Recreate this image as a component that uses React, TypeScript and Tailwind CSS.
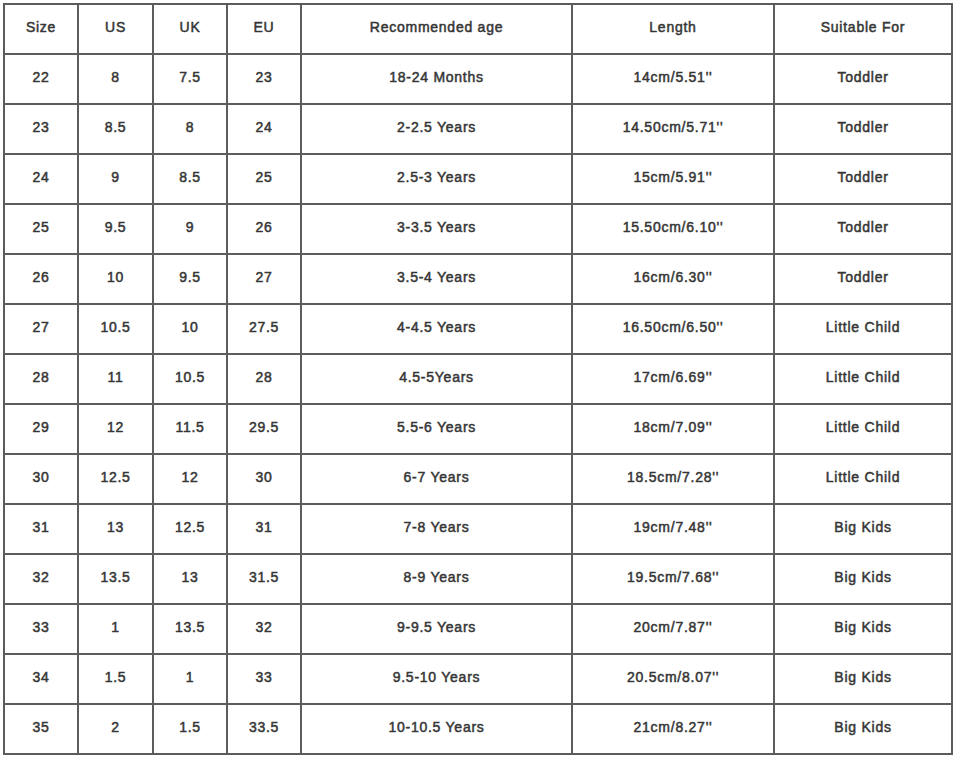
import React from "react";

const headers = ["Size", "US", "UK", "EU", "Recommended age", "Length", "Suitable For"];

const rows: string[][] = [
  ["22", "8", "7.5", "23", "18-24 Months", "14cm/5.51''", "Toddler"],
  ["23", "8.5", "8", "24", "2-2.5 Years", "14.50cm/5.71''", "Toddler"],
  ["24", "9", "8.5", "25", "2.5-3 Years", "15cm/5.91''", "Toddler"],
  ["25", "9.5", "9", "26", "3-3.5 Years", "15.50cm/6.10''", "Toddler"],
  ["26", "10", "9.5", "27", "3.5-4 Years", "16cm/6.30''", "Toddler"],
  ["27", "10.5", "10", "27.5", "4-4.5 Years", "16.50cm/6.50''", "Little Child"],
  ["28", "11", "10.5", "28", "4.5-5Years", "17cm/6.69''", "Little Child"],
  ["29", "12", "11.5", "29.5", "5.5-6 Years", "18cm/7.09''", "Little Child"],
  ["30", "12.5", "12", "30", "6-7 Years", "18.5cm/7.28''", "Little Child"],
  ["31", "13", "12.5", "31", "7-8 Years", "19cm/7.48''", "Big Kids"],
  ["32", "13.5", "13", "31.5", "8-9 Years", "19.5cm/7.68''", "Big Kids"],
  ["33", "1", "13.5", "32", "9-9.5 Years", "20cm/7.87''", "Big Kids"],
  ["34", "1.5", "1", "33", "9.5-10 Years", "20.5cm/8.07''", "Big Kids"],
  ["35", "2", "1.5", "33.5", "10-10.5 Years", "21cm/8.27''", "Big Kids"],
];

const widths = ["w-[74px]", "w-[75px]", "w-[74px]", "w-[74px]", "w-[271px]", "w-[202px]", "w-[178px]"];

const cell =
  "h-[50px] border-2 border-[#5c5c5c] text-center align-middle text-[14px] tracking-[0.75px] text-[#363636] p-0 pb-[4px] [-webkit-text-stroke:0.5px_#363636]";

export default function App() {
  return (
    <div className="w-[956px] h-[757px] bg-white pt-[3px] pl-[3px] font-['Liberation_Sans',Arial,sans-serif]">
      <table className="w-[950px] table-fixed border-collapse">
        <thead>
          <tr>
            {headers.map((h, i) => (
              <th key={h} className={`${cell} ${widths[i]} font-normal`}>
                {h}
              </th>
            ))}
          </tr>
        </thead>
        <tbody>
          {rows.map((r) => (
            <tr key={r[0]}>
              {r.map((v, i) => (
                <td key={i} className={cell}>
                  {v}
                </td>
              ))}
            </tr>
          ))}
        </tbody>
      </table>
    </div>
  );
}
